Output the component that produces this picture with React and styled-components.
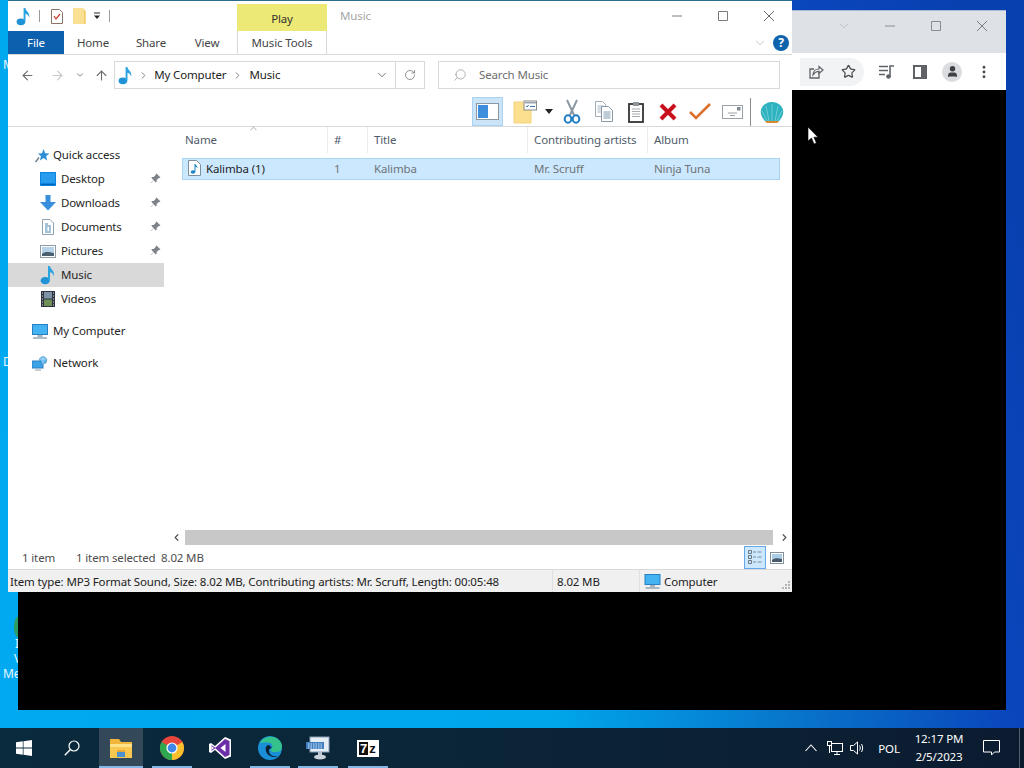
import React from "react";
import styled, { createGlobalStyle } from "styled-components";
import { ArrowLeft, ArrowRight, ArrowUp, ChevronDown, ChevronRight, ChevronUp, ChevronLeft, RotateCw, Search, Star, MoreVertical, User } from "lucide-react";

const Global = createGlobalStyle`
  html, body { margin: 0; padding: 0; overflow: hidden; }
  body { font-family: "Noto Sans", "Open Sans", sans-serif; font-size: 11.5px; letter-spacing: -0.14px; color: #222; }
  * { box-sizing: border-box; }
`;

const Screen = styled.div`
  width: 1024px; height: 768px; display: flex; flex-direction: column; overflow: hidden;
`;
const Desktop = styled.div`
  position: relative; flex: 1; overflow: hidden;
  background: linear-gradient(74deg, #00a9f1 0%, #00a6ea 45%, #0874ca 65%, #0a46bc 82%, #0840b0 95%);
`;
const DeskLabel = styled.span`
  position: absolute; color: #e8f6ff; font-size: 12px; line-height: 14px;
  left: ${p => p.$x}px; top: ${p => p.$y}px;
`;
const DeskBlob = styled.span`
  position: absolute; left: 14px; top: 616px; width: 10px; height: 22px; border-radius: 50%; background: #2f9c62;
`;

/* background browser */
const Browser = styled.div`
  position: absolute; left: 18px; top: 10px; width: 988px; height: 700px;
  display: flex; flex-direction: column; background: #000;
`;
const BrowserTitle = styled.div`
  height: 43px; background: #dee1e6; display: flex; align-items: flex-start; justify-content: flex-end;
  border-top: 1px solid #a9b8d6; padding-right: 1px;
`;
const BrowserCtl = styled.div`
  width: ${p => p.$w || 46}px; height: 30px; display: flex; align-items: center; justify-content: center; color: #7d7f84;
`;
const BrowserBar = styled.div`
  height: 37px; background: #fff; display: flex; align-items: center; justify-content: flex-end; padding-right: 6px;
`;
const Omni = styled.div`
  display: flex; align-items: center; background: #f1f3f4; height: 28px; border-radius: 0 14px 14px 0; margin-right: 6px;
`;
const BarIcon = styled.div`
  width: ${p => p.$w || 32}px; height: 28px; display: flex; align-items: center; justify-content: center; color: #5f6368;
`;
const Avatar = styled.div`
  width: 20px; height: 20px; border-radius: 50%; background: #dadce0; display: flex; align-items: center; justify-content: center; color: #3c4043;
`;

/* explorer */
const Win = styled.div`
  position: absolute; left: 8px; top: 0; width: 784px; height: 592px; background: #fff;
  display: flex; flex-direction: column; border-top: 1px solid #2c6d8e;
`;
const TitleRow = styled.div`
  height: 30px; display: flex; align-items: flex-end; position: relative;
`;
const Qat = styled.div`
  width: 229px; height: 30px; display: flex; align-items: center; padding-left: 8px;
`;
const QatItem = styled.div`
  width: ${p => p.$w}px; display: flex; align-items: center; justify-content: center;
`;
const QatSep = styled.div`
  width: 1px; height: 12px; background: #9a9a9a; margin: 0 ${p => p.$m || 0}px;
`;
const PlayTab = styled.div`
  width: 90px; height: 27px; background: #ece976; display: flex; align-items: center; justify-content: center; color: #333;
  padding-top: 1px;
`;
const WinTitle = styled.div`
  flex: 1; align-self: flex-start; padding: 7px 0 0 13px; color: #a6a6a6;
`;
const WinCtl = styled.div`
  width: 46px; height: 30px; display: flex; align-items: center; justify-content: center;
`;
const TabsRow = styled.div`
  height: 24px; display: flex; align-items: stretch; border-bottom: 1px solid #d9d9d9; position: relative;
`;
const FileTab = styled.div`
  width: 56px; height: 23px; background: #0d60ae; color: #fff; display: flex; align-items: center; justify-content: center;
`;
const Tab = styled.div`
  width: ${p => p.$w}px; display: flex; align-items: center; justify-content: center; color: #444;
`;
const ToolsTab = styled(Tab)`
  border-left: 1px solid #d8d8d8; border-right: 1px solid #d8d8d8; height: 23px; margin-left: ${p => p.$ml}px;
`;
const RibbonRight = styled.div`
  margin-left: auto; display: flex; align-items: center; padding-right: 3px; gap: 6px; color: #b5b5b5;
`;
const Help = styled.div`
  width: 16px; height: 16px; border-radius: 50%; background: #0f63ad; color: #fff; font-weight: 700; font-size: 12px;
  display: flex; align-items: center; justify-content: center; line-height: 1;
`;
const AddrRow = styled.div`
  height: 42px; display: flex; align-items: flex-start; padding-top: 6px;
`;
const NavBtn = styled.div`
  width: ${p => p.$w}px; height: 28px; display: flex; align-items: center; justify-content: center; color: ${p => p.$c || "#6e6e6e"};
`;
const AddrBox = styled.div`
  width: 282px; height: 28px; margin-left: ${p => p.$ml || 0}px; border: 1px solid #d9d9d9; display: flex; align-items: center; padding-left: 3px; color: #222;
`;
const Crumb = styled.span`
  margin: 0 ${p => p.$m || 0}px 2px; white-space: nowrap;
`;
const RefreshBox = styled.div`
  width: 29px; height: 28px; border: 1px solid #d9d9d9; border-left: 0; display: flex; align-items: center; justify-content: center; color: #777;
`;
const SearchBox = styled.div`
  width: 342px; height: 28px; margin-left: 13px; border: 1px solid #d9d9d9; display: flex; align-items: center; padding-left: 14px; gap: 12px; color: #6d6d6d;
`;
const ToolRow = styled.div`
  height: 30px; display: flex; justify-content: flex-end; align-items: stretch; padding-right: 4px; border-bottom: 1px solid #d9d9d9;
`;
const ToolSlot = styled.div`
  width: ${p => p.$w || 32}px; display: flex; align-items: center; justify-content: center;
  ${p => p.$on && "background:#cce4f7; border:1px solid #a9d3f2; margin-right:5px;"}
`;
const FolderSlot = styled(ToolSlot)`
  justify-content: flex-start; gap: 8px; padding-left: 5px;
`;
const ToolSep = styled.div`
  width: 8px; display: flex; align-items: center;
  &::before { content: ""; width: 1px; height: 28px; background: #8d8d8d; margin-left: 2px; }
`;
const Main = styled.div`
  flex: 1; display: flex; min-height: 0;
`;
const Side = styled.div`
  width: 156px; padding-top: 16px; display: flex; flex-direction: column;
`;
const SideRow = styled.div`
  height: 24px; display: flex; align-items: center; position: relative; color: #262626;
  padding-left: ${p => p.$pad}px; margin-top: ${p => p.$mt || 0}px;
  background: ${p => p.$sel ? "#d9d9d9" : "transparent"};
`;
const SideIcon = styled.span`
  width: ${p => p.$w}px; display: flex; align-items: center; justify-content: center; flex: none;
`;
const SidePin = styled.span`
  position: absolute; right: 3px; top: 6px; display: flex;
`;
const Content = styled.div`
  flex: 1; display: flex; flex-direction: column; min-width: 0;
`;
const Columns = styled.div`
  display: grid; grid-template-columns: 164px 40px 160px 120px 120px; height: 26px; position: relative; color: #505c6a;
`;
const ColHead = styled.div`
  display: flex; align-items: center; padding-left: ${p => p.$pad || 6}px; padding-bottom: 2px;
  border-right: ${p => p.$last ? 0 : "1px solid #ececec"};
`;
const SortMark = styled.span`
  position: absolute; left: 84px; top: -4px; color: #777; display: flex;
`;
const FileRow = styled.div`
  margin: 5px 0 0 18px; width: 598px; height: 22px; background: #cce8ff; border: 1px solid #a8d4f5;
  display: grid; grid-template-columns: 145px 40px 160px 120px 1fr; color: #6f7478;
`;
const FileCell = styled.div`
  display: flex; align-items: center; padding-left: ${p => p.$pad || 6}px; padding-bottom: 2px; gap: 5px; color: ${p => p.$dark ? "#1e1e1e" : "inherit"};
`;
const Spacer = styled.div`
  flex: 1;
`;
const HScroll = styled.div`
  height: 16px; margin-left: 162px; display: flex; align-items: stretch; color: #555;
`;
const ScrollBtn = styled.div`
  width: ${p => p.$w}px; display: flex; align-items: center; justify-content: center; padding-bottom: 1px;
`;
const Thumb = styled.div`
  flex: 1; background: #c8c8c8; margin: 0 3px 1px;
`;
const StatusRow = styled.div`
  height: 24px; display: flex; align-items: center; padding-left: 14px; color: #4d4d4d; border-bottom: 1px solid #d9d9d9;
`;
const StatusText = styled.span`
  width: ${p => p.$w ? `${p.$w}px` : "auto"}; flex: none; white-space: nowrap;
`;
const ViewBtn = styled.div`
  width: 22px; height: 23px; display: flex; align-items: center; justify-content: center;
  ${p => p.$on && "background:#cce8ff; border:1px solid #66a7e8;"}
`;
const DetailBar = styled.div`
  height: 22px; background: #f0f0f0; display: grid; grid-template-columns: 545px 87px 1fr; color: #222; position: relative;
`;
const DetailCell = styled.div`
  display: flex; align-items: center; padding-left: ${p => p.$pad}px; gap: 3px; white-space: nowrap; overflow: hidden;
  border-right: ${p => p.$sep ? "1px solid #e0e0e0" : 0};
`;
const Grip = styled.span`
  position: absolute; right: 1px; bottom: 1px; display: flex;
`;
const Cursor = styled.span`
  position: absolute; left: 807px; top: 126px; display: flex;
`;

/* taskbar */
const Taskbar = styled.div`
  height: 40px; flex: none; background: linear-gradient(90deg, #0a2a3d 0%, #0b2536 50%, #0c1b30 100%); display: flex; align-items: stretch; color: #fff;
`;
const TaskSlot = styled.div`
  width: ${p => p.$w || 48}px; margin-left: ${p => p.$ml || 0}px; position: relative; display: flex; align-items: center; justify-content: center;
  background: ${p => p.$active ? "#33495a" : "transparent"};
  ${p => p.$run && `&::after { content: ""; position: absolute; left: ${p.$inset ?? 4}px; right: ${p.$inset ?? 4}px; bottom: 0; height: 2px; background: #85b7e6; }`}
`;
const SevenBox = styled.div`
  width: 22px; height: 17px; background: #fff; display: flex; padding: 2px; font-family: "Liberation Sans", sans-serif; font-weight: 700; font-size: 13px; line-height: 13px; letter-spacing: 0;
`;
const SevenA = styled.span`
  flex: 1; background: #111; color: #fff; text-align: center;
`;
const SevenB = styled.span`
  flex: 1; background: #fff; color: #111; text-align: center;
`;
const Tray = styled.div`
  margin-left: auto; display: flex; align-items: center; color: #fff;
`;
const TrayItem = styled.div`
  width: ${p => p.$w}px; margin-left: ${p => p.$ml || 0}px; display: flex; align-items: center; justify-content: center;
`;
const Clock = styled.div`
  width: 60px; text-align: center; line-height: 18px; color: #fff; white-space: nowrap;
`;
const ShowDesk = styled.div`
  width: 5px; height: 40px; border-left: 1px solid #4f5f6d; margin-left: 11px;
`;

/* drawings */
const Note = ({ s = 20 }) => (
  <svg width={s * 0.8} height={s} viewBox="0 0 16 20">
    <ellipse cx="5.2" cy="15.6" rx="4.6" ry="3.6" fill="#1f93d6" />
    <path d="M8 15V1h1.8c.3 3 5.2 4.6 4.2 10.4-.6-2.6-2.2-3.6-4-4.2V15z" fill="#2ba3e0" />
  </svg>
);
const CheckDoc = () => (
  <svg width="12" height="15" viewBox="0 0 12 15"><path d="M.5.5h8l3 3v11H.5z" fill="#fff" stroke="#8b7466" /><path d="M3 7l2 3 4-5" fill="none" stroke="#d0432c" strokeWidth="1.3" /></svg>
);
const TinyFolder = () => (
  <svg width="13" height="16" viewBox="0 0 13 16"><path d="M0 0h10l3 3v13H0z" fill="#f9e093" /><path d="M11.500 2v14" stroke="#f1c86a" /></svg>
);
const QatDrop = () => (
  <svg width="8" height="8" viewBox="0 0 8 8"><path d="M1 1h6" stroke="#222" /><path d="M1 3.5h6L4 7z" fill="#222" /></svg>
);
const Line = ({ d, s = 12, c = "#707070" }) => (
  <svg width={s} height={s} viewBox="0 0 12 12"><path d={d} fill="none" stroke={c} strokeWidth="1" /></svg>
);
const Pin = () => (
  <svg width="11" height="11" viewBox="0 0 11 11"><path d="M6.5.5l4 4-1 .6-.7-.2L6.600 7.100l.1 1.700-.8.7-2.300-2.300L.8 10.200l-.3-.3 3-3L1.300 4.700l.7-.8 1.700.1L5.900 1.800l-.1-.7z" fill="#7d8288" /></svg>
);
const QuickStar = () => (
  <svg width="15" height="15" viewBox="0 0 15 15"><path d="M8.500 1l1.700 4.200 4.300.3-3.400 2.800 1.200 4.200-3.700-2.400L4.900 12.500 6 8.300 3 5.500l4-.3z" fill="#2f8fd6" /><path d="M4 9.500L.5 14" stroke="#6a7c8a" strokeWidth="1.400" /></svg>
);
const DesktopIco = () => (
  <svg width="16" height="14" viewBox="0 0 16 14"><rect width="16" height="14" fill="#0a84e0" /><rect x="1" y="1" width="14" height="10" fill="#2a9cf0" /><path d="M1 12.500h14" stroke="#0062b4" /></svg>
);
const DownIco = () => (
  <svg width="16" height="16" viewBox="0 0 16 16"><path d="M5.500 0h5v7H16l-8 8.500L0 7h5.500z" fill="#3a8fdc" /></svg>
);
const DocIco = () => (
  <svg width="12" height="16" viewBox="0 0 12 16"><path d="M.5.5h7.500l3.500 3.500v11.500H.5z" fill="#fff" stroke="#8da4b6" /><path d="M3 5h3M3 7h6M3 9h2.500M7 9h2M3 11h2.500M7 11h2M3 13h6" stroke="#4a86b2" /></svg>
);
const PicIco = () => (
  <svg width="16" height="13" viewBox="0 0 16 13"><rect x=".5" y=".5" width="15" height="12" fill="#fff" stroke="#8f9aa3" /><rect x="2" y="2" width="12" height="9" fill="#b7d3ea" /><path d="M2 9c3-3 7-2 12-1v3H2z" fill="#4c5f6f" /></svg>
);
const FilmIco = () => (
  <svg width="14" height="16" viewBox="0 0 14 16"><rect width="14" height="16" fill="#2d3440" /><rect x="3" y="1" width="8" height="6.500" fill="#7e93a8" /><rect x="3" y="8.500" width="8" height="6.500" fill="#6e8f55" /><path d="M1 2h1M1 5h1M1 8h1M1 11h1M1 14h1M12 2h1M12 5h1M12 8h1M12 11h1M12 14h1" stroke="#ddd" /></svg>
);
const PcIco = ({ w = 16, h = 15 }) => (
  <svg width={w} height={h} viewBox="0 0 16 15"><rect x=".5" y=".5" width="15" height="10" fill="#45b2f2" stroke="#2a7fc0" /><path d="M5.500 11h5v2h-5z" fill="#a8b3bc" /><path d="M1 14h14" stroke="#8ea0ad" strokeWidth="1.400" /></svg>
);
const NetIco = () => (
  <svg width="16" height="16" viewBox="0 0 16 16"><rect x="0" y="6" width="11" height="7" fill="#3aa2e6" stroke="#2a7fc0" /><path d="M3 15h6" stroke="#8ea0ad" /><path d="M7 4l4-3 4 3-1 4-4 1z" fill="#5cb6ec" stroke="#2f7fb8" strokeWidth=".6" /><path d="M11 1v8M7 4l8 0" stroke="#d8eefa" strokeWidth=".6" /></svg>
);
const MusicFile = () => (
  <svg width="13" height="16" viewBox="0 0 13 16"><path d="M.5.500h8l4 4v11H.5z" fill="#fff" stroke="#7f8f9c" /><ellipse cx="5" cy="12" rx="2.300" ry="1.800" fill="#1d87c9" /><path d="M6.500 12V4h1c.2 1.800 2.500 2 2 4.500-.5-1-1.200-1.500-2-1.700V12z" fill="#1d87c9" /></svg>
);
const PaneIco = () => (
  <svg width="23" height="17" viewBox="0 0 23 17"><rect x=".5" y=".5" width="22" height="16" fill="#fff" stroke="#8a98a5" /><rect x="2" y="2" width="10" height="13" fill="#3f8ede" /></svg>
);
const FolderTask = () => (
  <svg width="24" height="24" viewBox="0 0 24 24"><path d="M1 2h9l8 3v18H1z" fill="#fce08f" stroke="#f2d27c" /><rect x="11" y="1" width="12.500" height="9" fill="#fff" stroke="#8a8a8a" /><path d="M12 2h11v1.500H12z" fill="#9aa7b3" /><path d="M13 6l1 1 1.500-2M17 6.500h5" stroke="#4275b0" fill="none" /></svg>
);
const DropTri = () => (
  <svg width="8" height="5" viewBox="0 0 8 5"><path d="M0 0h8L4 5z" fill="#222" /></svg>
);
const Scissors = () => (
  <svg width="18" height="25" viewBox="0 0 18 25"><path d="M4 1l7 15M14 1L7 16" stroke="#8b98a3" strokeWidth="2" fill="none" /><ellipse cx="5" cy="20" rx="3.300" ry="3.800" fill="none" stroke="#1f7fc4" strokeWidth="2" /><ellipse cx="13" cy="20" rx="3.300" ry="3.800" fill="none" stroke="#1f7fc4" strokeWidth="2" /></svg>
);
const CopyIco = () => (
  <svg width="18" height="21" viewBox="0 0 18 21"><path d="M.5.500h7l3 3v12H.5z" fill="#fff" stroke="#a2adb6" /><path d="M2.500 5h6M2.500 7h6M2.500 9h6M2.500 11h4" stroke="#a9b8c4" /><path d="M6.500 5.500h7l4 4v11h-11z" fill="#fff" stroke="#8a97a2" /><path d="M8.500 11h7M8.500 13h7M8.500 15h7M8.500 17h7" stroke="#7e9ab0" /></svg>
);
const PasteIco = () => (
  <svg width="16" height="22" viewBox="0 0 16 22"><rect x="1" y="3" width="14" height="18" fill="#fff" stroke="#333" strokeWidth="1.800" /><rect x="5" y="1" width="6" height="4" fill="#8f9499" /><path d="M4 8h8M4 10.500h8M4 13h8M4 15.500h8" stroke="#a7adb3" /></svg>
);
const RedX = () => (
  <svg width="18" height="18" viewBox="0 0 18 18"><path d="M2 2l14 14M16 2L2 16" stroke="#c8101c" strokeWidth="4" /></svg>
);
const OrangeCheck = () => (
  <svg width="22" height="17" viewBox="0 0 22 17"><path d="M1 9l6 6L21 1" fill="none" stroke="#dd6f2c" strokeWidth="2.600" /></svg>
);
const Envelope = () => (
  <svg width="21" height="14" viewBox="0 0 21 14"><rect x=".5" y=".5" width="20" height="13" fill="#fff" stroke="#9aa2a8" /><rect x="15" y="2" width="3.500" height="3.500" fill="#7e8a94" /><path d="M6 8h9M8 10.500h5" stroke="#9aa2a8" /></svg>
);
const Shell = () => (
  <svg width="24" height="22" viewBox="0 0 24 22"><path d="M5 20C2 17 0 13 1 9 2 4 7 1 12 1s10 3 11 8c1 4-1 8-4 11z" fill="#2eb2c0" /><path d="M5 20h14l-1.500 2h-11z" fill="#d98a2e" /><path d="M12 20V3M9 20L6 5M15 20l3-15M7 20L2 10M17 20l5-10" stroke="#7fd3da" strokeWidth=".8" /></svg>
);
const DetailsView = () => (
  <svg width="14" height="15" viewBox="0 0 14 15"><path d="M.5.500h3v3h-3zM.5 5.500h3v3h-3zM.5 10.500h3v3h-3z" fill="none" stroke="#6b7780" /><path d="M5 2h3M9.500 2h4M5 7h3M9.500 7h4M5 12h3M9.500 12h4" stroke="#7f8a92" /></svg>
);
const ThumbView = () => (
  <svg width="14" height="12" viewBox="0 0 14 12"><rect x=".5" y=".5" width="13" height="11" fill="#fff" stroke="#85919a" /><rect x="2" y="2" width="10" height="8" fill="#a9cde8" /><path d="M2 8c2-2 6-2 10-1v3H2z" fill="#47596a" /></svg>
);
const GripIco = () => (
  <svg width="11" height="11" viewBox="0 0 11 11" fill="#b5b5b5"><rect x="8" y="1" width="2" height="2" /><rect x="5" y="4" width="2" height="2" /><rect x="8" y="4" width="2" height="2" /><rect x="2" y="7" width="2" height="2" /><rect x="5" y="7" width="2" height="2" /><rect x="8" y="7" width="2" height="2" /></svg>
);
const Arrow = () => (
  <svg width="12" height="19" viewBox="0 0 12 19"><path d="M1 1v14l3.500-3 2.500 6 2.400-1-2.500-5.800H11z" fill="#fff" stroke="#000" strokeWidth=".6" /></svg>
);
const Share = () => (
  <svg width="16" height="16" viewBox="0 0 16 16"><path d="M11 7.500V14H2V5h4" fill="none" stroke="#5f6368" strokeWidth="1.300" /><path d="M5 11c0-4 3-6 6-6V2.500L15 6l-4 3.500V7.300c-2.500 0-4.500 1.300-6 3.700z" fill="none" stroke="#5f6368" strokeWidth="1.200" /></svg>
);
const MediaQ = () => (
  <svg width="16" height="14" viewBox="0 0 16 14"><path d="M0 1.500h9M0 5.500h9M0 9.500h6M11 12V1h4" fill="none" stroke="#5f6368" strokeWidth="1.600" /><circle cx="9.500" cy="11.500" r="2.300" fill="#5f6368" /></svg>
);
const SidePanel = () => (
  <svg width="14" height="14" viewBox="0 0 14 14"><rect x="1" y="1" width="12" height="12" fill="#fff" stroke="#5f6368" strokeWidth="2" /><rect x="8" y="1" width="5" height="12" fill="#5f6368" /></svg>
);
const WinLogo = () => (
  <svg width="16" height="16" viewBox="0 0 16 16" fill="#fff"><path d="M0 2.300L6.800 1.300v6.300H0zM7.500 1.200L16 0v7.600H7.500zM0 8.400h6.800v6.300L0 13.700zM7.500 8.400H16V16l-8.500-1.200z" /></svg>
);
const Magnifier = () => (
  <svg width="16" height="16" viewBox="0 0 16 16"><circle cx="10" cy="6" r="5" fill="none" stroke="#fff" strokeWidth="1.200" /><path d="M6.400 9.600L.8 15.200" stroke="#fff" strokeWidth="1.400" /></svg>
);
const ExplorerIco = () => (
  <svg width="22" height="19" viewBox="0 0 22 19"><path d="M0 0h9l2 3h11v4H0z" fill="#f2b63c" /><rect y="5" width="22" height="3" fill="#fde28a" /><rect y="8" width="22" height="11" fill="#f9c850" /><rect x="7" y="11" width="8" height="2" fill="#e8a93a" /><rect x="7" y="13" width="8" height="5" fill="#4a92cf" /></svg>
);
const ChromeIco = () => (
  <svg width="24" height="24" viewBox="0 0 24 24">
    <circle cx="12" cy="12" r="12" fill="#e8453c" />
    <path d="M12 12L1.600 6A12 12 0 0 0 12 24z" fill="#2fa84f" />
    <path d="M12 12h12A12 12 0 0 1 12 24L12 12z" fill="#f9c02e" />
    <path d="M12 12l10.400-6A12 12 0 0 1 24 12z" fill="#f9c02e" />
    <circle cx="12" cy="12" r="5.600" fill="#fff" /><circle cx="12" cy="12" r="4.400" fill="#3f88ea" />
  </svg>
);
const VsIco = () => (
  <svg width="24" height="24" viewBox="0 0 24 24"><path d="M17 1l6 2.500v17L17 23 7 14l-4 3-2-1V8l2-1 4 3z" fill="#fff" /><path d="M17 3l4.500 2v14L17 21 7.300 12.300 3.500 15V9l3.800 2.700z" fill="#6b2fa8" /><path d="M17.500 8v8l-5-4z" fill="#fff" /><path d="M3.500 10l2.500 2-2.500 2z" fill="#fff" /></svg>
);
const EdgeIco = () => (
  <svg width="24" height="24" viewBox="0 0 24 24"><circle cx="12" cy="12" r="12" fill="#1a8fd8" /><path d="M2 7C5 0 15-1 20 3c4 3 5 8 3 11-1 2-4 2-7 2-3 0-4-2-3-3 2-1 2-5-1-6-4-1-8 0-10 0z" fill="#35c18b" /><path d="M11 9c-3 0-4 3-3 6 1 4 5 6 9 6 1 0 2 0 2-.5-6 0-8-3-8-6 0-2 2-2.500 3-2.500z" fill="#0b2033" /></svg>
);
const RdIco = () => (
  <svg width="24" height="24" viewBox="0 0 24 24"><rect x="4" y="1" width="19" height="15" fill="#e5edf5" stroke="#8aa0b5" /><rect x="0" y="6" width="18" height="7" fill="#3f7fc0" /><path d="M2 8h14M2 10h14M2 12h14" stroke="#cfe4f7" strokeDasharray="1.500 1" /><path d="M12 16h4v3h-4z" fill="#b8c2cc" /><ellipse cx="14" cy="21" rx="6" ry="2.500" fill="#c9d2da" /></svg>
);
const TrayUp = () => (
  <svg width="12" height="8" viewBox="0 0 12 8"><path d="M.5 7L6 1l5.500 6" fill="none" stroke="#fff" strokeWidth="1.100" /></svg>
);
const TrayNet = () => (
  <svg width="16" height="14" viewBox="0 0 16 14" fill="none" stroke="#fff"><rect x="4.500" y="2.500" width="11" height="8" /><path d="M10 11v2M7 13.500h6" /><rect x=".5" y=".5" width="4" height="4" fill="#0b2033" /><path d="M2.500 4.500V12" /></svg>
);
const TrayVol = () => (
  <svg width="16" height="14" viewBox="0 0 16 14" fill="none" stroke="#fff"><path d="M.5 4.500h3L7.500 1v12L3.500 9.500h-3z" /><path d="M9.500 4.500c1 1.500 1 3.500 0 5M11.500 3c1.500 2.500 1.500 5.500 0 8" /></svg>
);
const Bubble = () => (
  <svg width="17" height="16" viewBox="0 0 17 16"><path d="M.5.500h16v11.500h-5l-3 3v-3H.5z" fill="none" stroke="#fff" /></svg>
);

const sideItems = [
  { label: "Desktop", icon: <DesktopIco />, pin: true },
  { label: "Downloads", icon: <DownIco />, pin: true },
  { label: "Documents", icon: <DocIco />, pin: true },
  { label: "Pictures", icon: <PicIco />, pin: true },
  { label: "Music", icon: <Note s={20} />, sel: true },
  { label: "Videos", icon: <FilmIco /> },
];

export default function App() {
  return (
    <Screen>
      <Global />
      <Desktop>
        <DeskLabel $x={3} $y={58}>M</DeskLabel>
        <DeskLabel $x={3} $y={355}>D</DeskLabel>
        <DeskBlob />
        <DeskLabel $x={15} $y={637}>I</DeskLabel>
        <DeskLabel $x={14} $y={652}>V</DeskLabel>
        <DeskLabel $x={3} $y={667}>Me</DeskLabel>

        <Browser>
          <BrowserTitle>
            <BrowserCtl><ChevronDown size={14} strokeWidth={1} color="#a0a2a6" /></BrowserCtl>
            <BrowserCtl><Line d="M1 6h10" c="#8a8c90" /></BrowserCtl>
            <BrowserCtl><Line d="M1.500 1.500h9v9h-9z" c="#8a8c90" /></BrowserCtl>
            <BrowserCtl><Line d="M1 1l10 10M11 1L1 11" c="#7a7c80" /></BrowserCtl>
          </BrowserTitle>
          <BrowserBar>
            <Omni>
              <BarIcon><Share /></BarIcon>
              <BarIcon><Star size={15} strokeWidth={2} color="#4a4d51" /></BarIcon>
            </Omni>
            <BarIcon $w={33}><MediaQ /></BarIcon>
            <BarIcon $w={33}><SidePanel /></BarIcon>
            <BarIcon><Avatar><User size={13} fill="#3c4043" strokeWidth={2} /></Avatar></BarIcon>
            <BarIcon><MoreVertical size={16} strokeWidth={2.4} color="#4a4d51" /></BarIcon>
          </BrowserBar>
        </Browser>

        <Win>
          <TitleRow>
            <Qat>
              <QatItem $w={16}><Note s={19} /></QatItem>
              <QatSep $m={7} />
              <QatItem $w={20}><CheckDoc /></QatItem>
              <QatItem $w={24}><TinyFolder /></QatItem>
              <QatItem $w={12}><QatDrop /></QatItem>
              <QatSep $m={6} />
            </Qat>
            <PlayTab>Play</PlayTab>
            <WinTitle>Music</WinTitle>
            <WinCtl><Line d="M1 6h10" c="#7a7a7a" /></WinCtl>
            <WinCtl><Line d="M1.500 1.500h9v9h-9z" c="#7a7a7a" /></WinCtl>
            <WinCtl><Line d="M1 1l10 10M11 1L1 11" c="#6a6a6a" /></WinCtl>
          </TitleRow>
          <TabsRow>
            <FileTab>File</FileTab>
            <Tab $w={58}>Home</Tab>
            <Tab $w={58}>Share</Tab>
            <Tab $w={54}>View</Tab>
            <ToolsTab $w={90} $ml={3}>Music Tools</ToolsTab>
            <RibbonRight>
              <ChevronDown size={14} strokeWidth={1.4} />
              <Help>?</Help>
            </RibbonRight>
          </TabsRow>
          <AddrRow>
            <NavBtn $w={38}><ArrowLeft size={15} strokeWidth={1.8} /></NavBtn>
            <NavBtn $w={22} $c="#c8c8c8"><ArrowRight size={15} strokeWidth={1.8} /></NavBtn>
            <NavBtn $w={24}><ChevronDown size={10} strokeWidth={2} /></NavBtn>
            <NavBtn $w={18}><ArrowUp size={15} strokeWidth={1.8} /></NavBtn>
            <AddrBox $ml={4}>
              <Note s={19} />
              <SideIcon $w={21}><ChevronRight size={11} strokeWidth={2} color="#777" /></SideIcon>
              <Crumb>My Computer</Crumb>
              <SideIcon $w={23}><ChevronRight size={11} strokeWidth={2} color="#777" /></SideIcon>
              <Crumb>Music</Crumb>
              <Spacer />
              <NavBtn $w={26}><ChevronDown size={14} strokeWidth={1.6} /></NavBtn>
            </AddrBox>
            <RefreshBox><RotateCw size={12} strokeWidth={1.6} /></RefreshBox>
            <SearchBox>
              <Search size={14} strokeWidth={1.1} color="#8a8a8a" style={{ transform: "scaleX(-1)" }} />
              <Crumb>Search Music</Crumb>
            </SearchBox>
          </AddrRow>
          <ToolRow>
            <ToolSlot $w={31} $on><PaneIco /></ToolSlot>
            <FolderSlot $w={47}><FolderTask /><DropTri /></FolderSlot>
            <ToolSlot $w={33}><Scissors /></ToolSlot>
            <ToolSlot><CopyIco /></ToolSlot>
            <ToolSlot><PasteIco /></ToolSlot>
            <ToolSlot><RedX /></ToolSlot>
            <ToolSlot><OrangeCheck /></ToolSlot>
            <ToolSlot><Envelope /></ToolSlot>
            <ToolSep />
            <ToolSlot><Shell /></ToolSlot>
          </ToolRow>
          <Main>
            <Side>
              <SideRow $pad={27}><SideIcon $w={15}><QuickStar /></SideIcon><Crumb $m={3}>Quick access</Crumb></SideRow>
              {sideItems.map(it => (
                <SideRow key={it.label} $pad={32} $sel={it.sel}>
                  <SideIcon $w={16}>{it.icon}</SideIcon>
                  <Crumb $m={5}>{it.label}</Crumb>
                  {it.pin && <SidePin><Pin /></SidePin>}
                </SideRow>
              ))}
              <SideRow $pad={23} $mt={8}><SideIcon $w={17}><PcIco /></SideIcon><Crumb $m={5}>My Computer</Crumb></SideRow>
              <SideRow $pad={23} $mt={8}><SideIcon $w={17}><NetIco /></SideIcon><Crumb $m={5}>Network</Crumb></SideRow>
            </Side>
            <Content>
              <Columns>
                <SortMark><ChevronUp size={11} strokeWidth={1.4} /></SortMark>
                <ColHead $pad={21}>Name</ColHead>
                <ColHead>#</ColHead>
                <ColHead>Title</ColHead>
                <ColHead>Contributing artists</ColHead>
                <ColHead $last>Album</ColHead>
              </Columns>
              <FileRow>
                <FileCell $dark $pad={5}><MusicFile /><span>Kalimba (1)</span></FileCell>
                <FileCell>1</FileCell>
                <FileCell>Kalimba</FileCell>
                <FileCell>Mr. Scruff</FileCell>
                <FileCell>Ninja Tuna</FileCell>
              </FileRow>
            </Content>
          </Main>
          <HScroll>
            <ScrollBtn $w={12}><ChevronLeft size={11} strokeWidth={2.6} /></ScrollBtn>
            <Thumb />
            <ScrollBtn $w={16}><ChevronRight size={11} strokeWidth={2.6} /></ScrollBtn>
          </HScroll>
          <StatusRow>
            <StatusText $w={54}>1 item</StatusText>
            <StatusText $w={85}>1 item selected</StatusText>
            <StatusText>8.02 MB</StatusText>
            <Spacer />
            <ViewBtn $on><DetailsView /></ViewBtn>
            <ViewBtn><ThumbView /></ViewBtn>
            <StatusText $w={4} />
          </StatusRow>
          <DetailBar>
            <DetailCell $pad={2} $sep>Item type: MP3 Format Sound, Size: 8.02 MB, Contributing artists: Mr. Scruff, Length: 00:05:48</DetailCell>
            <DetailCell $pad={4} $sep>8.02 MB</DetailCell>
            <DetailCell $pad={4}><PcIco w={17} h={15} /><span>Computer</span></DetailCell>
            <Grip><GripIco /></Grip>
          </DetailBar>
        </Win>

        <Cursor><Arrow /></Cursor>
      </Desktop>
      <Taskbar>
        <TaskSlot><WinLogo /></TaskSlot>
        <TaskSlot><Magnifier /></TaskSlot>
        <TaskSlot $w={44} $ml={3} $active $run $inset={0}><ExplorerIco /></TaskSlot>
        <TaskSlot $ml={5} $run><ChromeIco /></TaskSlot>
        <TaskSlot><VsIco /></TaskSlot>
        <TaskSlot $ml={2} $run><EdgeIco /></TaskSlot>
        <TaskSlot $run><RdIco /></TaskSlot>
        <TaskSlot $ml={2} $run><SevenBox><SevenA>7</SevenA><SevenB>z</SevenB></SevenBox></TaskSlot>
        <Tray>
          <TrayItem $w={24}><TrayUp /></TrayItem>
          <TrayItem $w={24}><TrayNet /></TrayItem>
          <TrayItem $w={22}><TrayVol /></TrayItem>
          <TrayItem $w={40}>POL</TrayItem>
          <Clock>12:17 PM<br />2/5/2023</Clock>
          <TrayItem $w={34} $ml={5}><Bubble /></TrayItem>
          <ShowDesk />
        </Tray>
      </Taskbar>
    </Screen>
  );
}
